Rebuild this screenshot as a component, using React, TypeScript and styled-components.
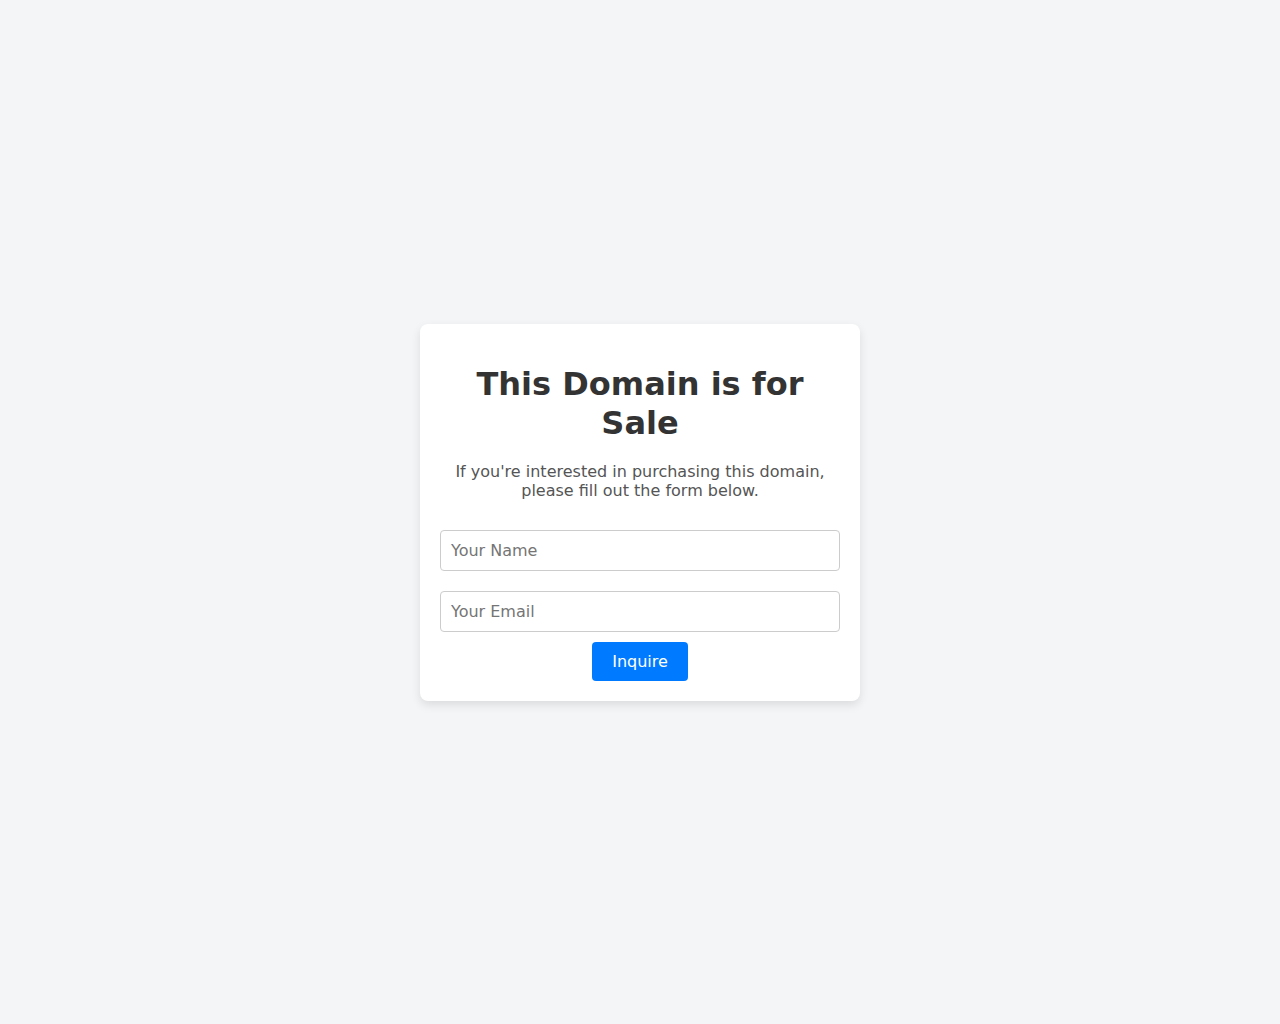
import React from "react";
import styled, { createGlobalStyle } from "styled-components";

const Global = createGlobalStyle`
  html, body { margin: 0; padding: 0; }
  body {
    background: #f4f5f7;
    font-family: "DejaVu Sans", sans-serif;
    color: #333;
  }
  * { box-sizing: border-box; }
`;

const Page = styled.main`
  min-height: 1024px;
  display: flex;
  align-items: center;
  justify-content: center;
`;

const Card = styled.section`
  width: 440px;
  padding: 20px;
  background: #fff;
  border-radius: 8px;
  box-shadow: 0 4px 10px rgba(0, 0, 0, 0.1);
  text-align: center;
`;

const Title = styled.h1`
  margin: 21px 0 19px;
  font-size: 32px;
  line-height: 39px;
  font-weight: bold;
  color: #333;
`;

const Lead = styled.p`
  margin: 0 0 30px;
  font-size: 16px;
  line-height: 19px;
  color: #555;
`;

const Form = styled.form`
  display: flex;
  flex-direction: column;
  align-items: center;
`;

const Input = styled.input<{ $gap: number }>`
  width: 100%;
  height: 41px;
  margin-bottom: ${(p) => p.$gap}px;
  padding: 10px;
  border: 1px solid #ccc;
  border-radius: 4px;
  font-family: "DejaVu Sans", sans-serif;
  font-size: 16px;
  color: #333;
  &::placeholder { color: #757575; }
`;

const Button = styled.button`
  height: 39px;
  padding: 0 20px;
  border: none;
  border-radius: 4px;
  background: #007bff;
  color: #fff;
  font-family: "DejaVu Sans", sans-serif;
  font-size: 16px;
  cursor: pointer;
`;

export default function App() {
  return (
    <>
      <Global />
      <Page>
        <Card>
          <Title>This Domain is for Sale</Title>
          <Lead>
            If you're interested in purchasing this domain, please fill out the form below.
          </Lead>
          <Form onSubmit={(e) => e.preventDefault()}>
            <Input $gap={20} type="text" placeholder="Your Name" />
            <Input $gap={10} type="email" placeholder="Your Email" />
            <Button type="submit">Inquire</Button>
          </Form>
        </Card>
      </Page>
    </>
  );
}
